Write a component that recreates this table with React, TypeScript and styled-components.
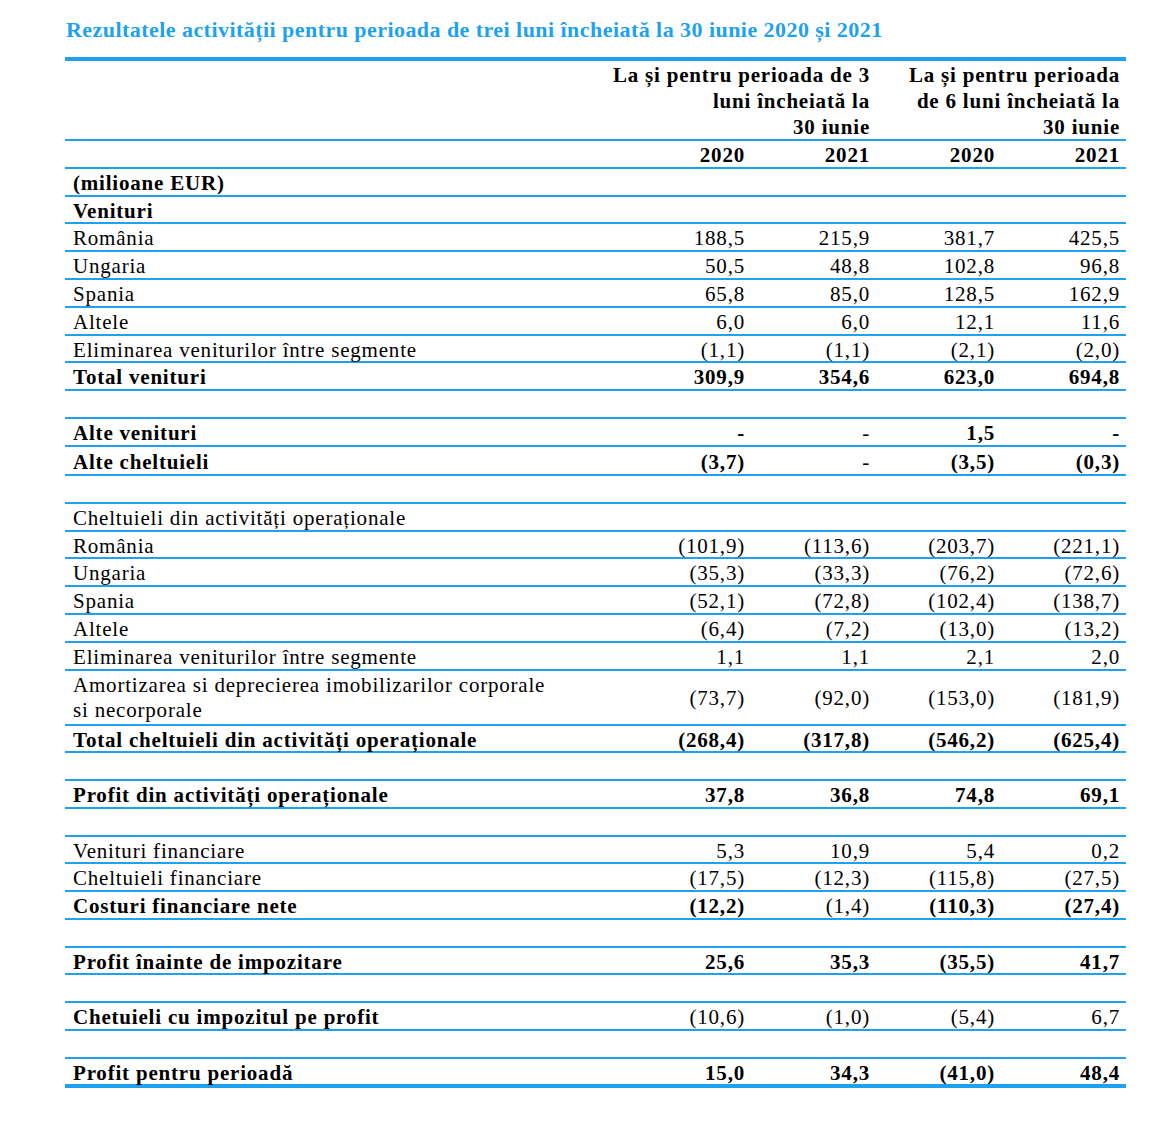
import React from "react";
import styled, { createGlobalStyle } from "styled-components";

const BLUE = "#1ea2ee";

const Global = createGlobalStyle`
  html, body { margin: 0; padding: 0; background: #fff; }
  body { font-family: "Liberation Serif", "Times New Roman", serif; color: #000; }
`;

const Page = styled.div`
  padding: 16px 0 40px 65px;
  width: 1061px;
`;

const Title = styled.h1`
  margin: 0 0 13px 1px;
  font-size: 22px;
  line-height: 28px;
  font-weight: bold;
  color: ${BLUE};
  letter-spacing: 0.45px;
  white-space: nowrap;
`;

const Table = styled.div`
  border-top: 4px solid ${BLUE};
  letter-spacing: 0.8px;
  font-size: 21px;
`;

const HeadGroups = styled.div`
  display: grid;
  grid-template-columns: 1fr auto 250px;
  border-bottom: 2px solid ${BLUE};
  font-weight: bold;
  line-height: 26px;
`;

const GroupCell = styled.div`
  text-align: right;
  white-space: nowrap;
  padding: 1px 6px 0 0;
  line-height: 26px;
  height: 77px;
`;

const Row = styled.div<{ $h: string; $last?: boolean }>`
  display: grid;
  grid-template-columns: 1fr repeat(4, 125px);
  align-items: center;
  min-height: ${(p) => p.$h};
  border-bottom: ${(p) => (p.$last ? "4px" : "2px")} solid ${BLUE};
`;

const Label = styled.div<{ $bold?: boolean; $tall?: boolean }>`
  padding-left: 8px;
  padding-top: ${(p) => (p.$tall ? "2px" : "3px")};
  font-weight: ${(p) => (p.$bold ? "bold" : "normal")};
  line-height: ${(p) => (p.$tall ? "25px" : "22.8px")};
  white-space: nowrap;
`;

const Value = styled.div<{ $bold?: boolean }>`
  text-align: right;
  padding: 3px 6px 0 0;
  font-weight: ${(p) => (p.$bold ? "bold" : "normal")};
  line-height: 22.8px;
  white-space: nowrap;
`;

type RowData = {
  label?: React.ReactNode;
  bold?: boolean;
  v?: string[];
  vb?: boolean[];
  tall?: boolean;
  h?: string;
};

const rows: RowData[] = [
  { label: "(milioane EUR)", bold: true },
  { label: "Venituri", bold: true },
  { label: "România", v: ["188,5", "215,9", "381,7", "425,5"] },
  { label: "Ungaria", v: ["50,5", "48,8", "102,8", "96,8"] },
  { label: "Spania", v: ["65,8", "85,0", "128,5", "162,9"] },
  { label: "Altele", v: ["6,0", "6,0", "12,1", "11,6"] },
  { label: "Eliminarea veniturilor între segmente", v: ["(1,1)", "(1,1)", "(2,1)", "(2,0)"] },
  { label: "Total venituri", bold: true, v: ["309,9", "354,6", "623,0", "694,8"] },
  {},
  { label: "Alte venituri", bold: true, v: ["-", "-", "1,5", "-"], vb: [true, false, true, true] },
  { label: "Alte cheltuieli", bold: true, v: ["(3,7)", "-", "(3,5)", "(0,3)"], vb: [true, false, true, true], h: "27.5px" },
  {},
  { label: "Cheltuieli din activități operaționale" },
  { label: "România", v: ["(101,9)", "(113,6)", "(203,7)", "(221,1)"] },
  { label: "Ungaria", v: ["(35,3)", "(33,3)", "(76,2)", "(72,6)"] },
  { label: "Spania", v: ["(52,1)", "(72,8)", "(102,4)", "(138,7)"] },
  { label: "Altele", v: ["(6,4)", "(7,2)", "(13,0)", "(13,2)"] },
  { label: "Eliminarea veniturilor între segmente", v: ["1,1", "1,1", "2,1", "2,0"] },
  {
    label: (
      <>
        Amortizarea si deprecierea imobilizarilor corporale
        <br />
        si necorporale
      </>
    ),
    tall: true,
    h: "53px",
    v: ["(73,7)", "(92,0)", "(153,0)", "(181,9)"],
  },
  { label: "Total cheltuieli din activități operaționale", bold: true, v: ["(268,4)", "(317,8)", "(546,2)", "(625,4)"] },
  {},
  { label: "Profit din activități operaționale", bold: true, v: ["37,8", "36,8", "74,8", "69,1"] },
  {},
  { label: "Venituri financiare", v: ["5,3", "10,9", "5,4", "0,2"] },
  { label: "Cheltuieli financiare", v: ["(17,5)", "(12,3)", "(115,8)", "(27,5)"] },
  { label: "Costuri financiare nete", bold: true, v: ["(12,2)", "(1,4)", "(110,3)", "(27,4)"], vb: [true, false, true, true] },
  {},
  { label: "Profit înainte de impozitare", bold: true, v: ["25,6", "35,3", "(35,5)", "41,7"] },
  {},
  { label: "Chetuieli cu impozitul pe profit", bold: true, v: ["(10,6)", "(1,0)", "(5,4)", "6,7"], vb: [false, false, false, false] },
  {},
  { label: "Profit pentru perioadă", bold: true, v: ["15,0", "34,3", "(41,0)", "48,4"] },
];

export default function App() {
  return (
    <>
      <Global />
      <Page>
        <Title>Rezultatele activității pentru perioada de trei luni încheiată la 30 iunie 2020 și 2021</Title>
        <Table>
          <HeadGroups>
            <div />
            <GroupCell>
              La și pentru perioada de 3
              <br />
              luni încheiată la
              <br />
              30 iunie
            </GroupCell>
            <GroupCell>
              La și pentru perioada
              <br />
              de 6 luni încheiată la
              <br />
              30 iunie
            </GroupCell>
          </HeadGroups>
          <Row $h="25.8px">
            <Label />
            <Value $bold>2020</Value>
            <Value $bold>2021</Value>
            <Value $bold>2020</Value>
            <Value $bold>2021</Value>
          </Row>
          {rows.map((r, i) => (
            <Row key={i} $h={r.h ?? "25.7px"} $last={i === rows.length - 1}>
              <Label $bold={r.bold} $tall={r.tall}>
                {r.label}
              </Label>
              {[0, 1, 2, 3].map((j) => (
                <Value key={j} $bold={r.vb ? r.vb[j] : r.bold}>
                  {r.v ? r.v[j] : ""}
                </Value>
              ))}
            </Row>
          ))}
        </Table>
      </Page>
    </>
  );
}
